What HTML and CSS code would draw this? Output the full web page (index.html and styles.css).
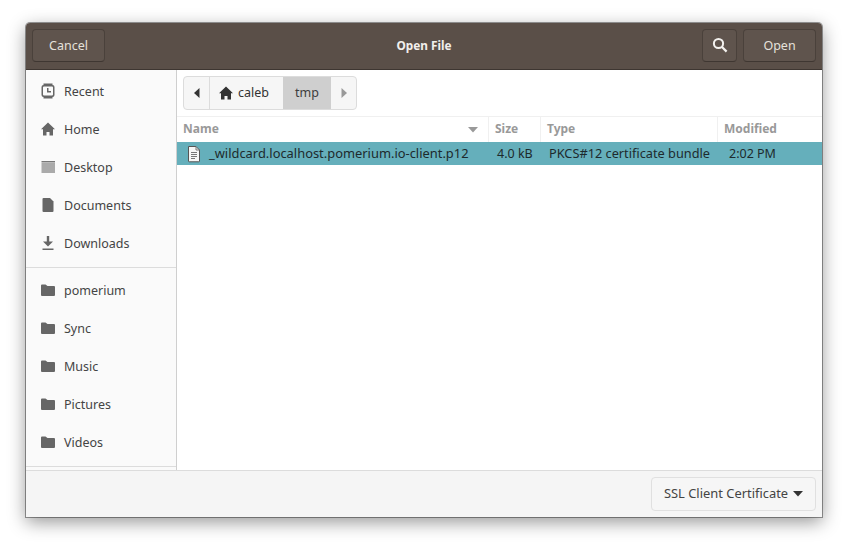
FILE: index.html
```html
<!DOCTYPE html>
<html lang="en">
<head>
<meta charset="utf-8">
<title>Open File</title>
<link rel="stylesheet" href="styles.css">
</head>
<body>
<div class="dialog">
  <header class="titlebar">
    <button class="hbtn cancel">Cancel</button>
    <div class="title">Open File</div>
    <button class="hbtn search" aria-label="Search">
      <svg width="16" height="16" viewBox="0 0 16 16"><circle cx="6.5" cy="6.5" r="4.6" fill="none" stroke="#f4f2ef" stroke-width="2"/><path d="M10 10l4.6 4.6" stroke="#f4f2ef" stroke-width="2.2" fill="none"/></svg>
    </button>
    <button class="hbtn open">Open</button>
  </header>
  <div class="middle">
    <nav class="sidebar">
      <ul class="places">
        <li class="place"><svg class="ic" width="16" height="16" viewBox="0 0 16 16"><path fill-rule="evenodd" fill="#666" d="M3.500 0.500h9v1.500a2 2 0 0 1 2 2v8a2 2 0 0 1-2 2v1.500h-9V14a2 2 0 0 1-2-2V4a2 2 0 0 1 2-2zM4 3.500a1 1 0 0 0-1 1v7a1 1 0 0 0 1 1h8a1 1 0 0 0 1-1v-7a1 1 0 0 0-1-1z"/><path fill="#666" d="M7 5h1.500v3H11v1.500H7z"/></svg><span>Recent</span></li>
        <li class="place"><svg class="ic" width="16" height="16" viewBox="0 0 16 16"><use href="#house" fill="#666"/></svg><span>Home</span></li>
        <li class="place"><svg class="ic" width="16" height="16" viewBox="0 0 16 16"><path fill="#777" d="M1.500 2h13.500v1.500H1.500z"/><path fill="#aaa" d="M1.500 4h13.500v10H1.500z"/></svg><span>Desktop</span></li>
        <li class="place"><svg class="ic" width="16" height="16" viewBox="0 0 16 16"><path fill="#666" d="M3.500 1H10l3.500 3.500V14a1 1 0 0 1-1 1H3.500a1 1 0 0 1-1-1V2a1 1 0 0 1 1-1z"/></svg><span>Documents</span></li>
        <li class="place"><svg class="ic" width="16" height="16" viewBox="0 0 16 16"><path fill="#666" d="M6.800 1h2.400v5.500H13L8 11.500 3 6.500h3.800zM2.500 13.500h11V15h-11z"/></svg><span>Downloads</span></li>
      </ul>
      <div class="sep"></div>
      <ul class="places">
        <li class="place"><svg class="ic" width="16" height="16" viewBox="0 0 16 16"><use href="#folder"/></svg><span>pomerium</span></li>
        <li class="place"><svg class="ic" width="16" height="16" viewBox="0 0 16 16"><use href="#folder"/></svg><span>Sync</span></li>
        <li class="place"><svg class="ic" width="16" height="16" viewBox="0 0 16 16"><use href="#folder"/></svg><span>Music</span></li>
        <li class="place"><svg class="ic" width="16" height="16" viewBox="0 0 16 16"><use href="#folder"/></svg><span>Pictures</span></li>
        <li class="place"><svg class="ic" width="16" height="16" viewBox="0 0 16 16"><use href="#folder"/></svg><span>Videos</span></li>
      </ul>
      <div class="sep last"></div>
    </nav>
    <main class="content">
      <div class="pathbar-wrap">
        <div class="pathbar">
          <div class="seg arrow"><svg width="8" height="10" viewBox="0 0 8 10"><path fill="#333" d="M6.500 0v10L1 5z"/></svg></div>
          <div class="seg home"><svg width="16" height="16" viewBox="0 0 16 16"><use href="#house" fill="#333"/></svg><span>caleb</span></div>
          <div class="seg active">tmp</div>
          <div class="seg arrow end"><svg width="8" height="10" viewBox="0 0 8 10"><path fill="#999" d="M1.500 0v10L7 5z"/></svg></div>
        </div>
      </div>
      <div class="cols">
        <div class="col c-name"><span>Name</span><svg width="10" height="6" viewBox="0 0 10 6"><path fill="#999" d="M0 0h10L5 5.500z"/></svg></div>
        <div class="col c-size">Size</div>
        <div class="col c-type">Type</div>
        <div class="col c-mod">Modified</div>
      </div>
      <div class="row">
        <div class="cell c-name"><svg class="fileic" width="16" height="18" viewBox="0 0 16 18"><path fill="#f6f6f5" stroke="#555" d="M2.500 1.500h7.500l3.500 3.500v11a.8.8 0 0 1-.8.800H3.300a.8.8 0 0 1-.8-.8z"/><path fill="none" stroke="#777" d="M10 1.500V5h3.500M5 7.500h6M5 9.500h6M5 11.500h6M5 13.500h4"/></svg><span>_wildcard.localhost.pomerium.io-client.p12</span></div>
        <div class="cell c-size val">4.0 kB</div>
        <div class="cell c-type val">PKCS#12 certificate bundle</div>
        <div class="cell c-mod val">2:02 PM</div>
      </div>
    </main>
  </div>
  <footer class="bottombar">
    <button class="filter"><span>SSL Client Certificate</span><svg width="10" height="6" viewBox="0 0 10 6"><path fill="#333" d="M0 0h10L5 5.500z"/></svg></button>
  </footer>
</div>
<svg class="defs" width="0" height="0"><defs><path id="folder" fill="#666" d="M1 3.500a1 1 0 0 1 1-1h3.500l2 1.500H14a1 1 0 0 1 1 1v8a1 1 0 0 1-1 1H2a1 1 0 0 1-1-1z"/><path id="house" d="M8 1.500l7 6.700H13v6.300H9.500V11h-3v3.500H3V8.200H1z"/></defs></svg>
</body>
</html>
```

FILE: styles.css
```css
* { box-sizing: border-box; }
html, body { margin: 0; height: 100%; }
body {
  background: #fff;
  padding: 23px 26px 29px;
  font-family: "Noto Sans", sans-serif;
  font-size: 12.500px;
  color: #3d3d3d;
  overflow: hidden;
}
ul { list-style: none; margin: 0; padding: 0; }
button { font: inherit; }
.defs { position: absolute; }
.dialog {
  height: 494px;
  display: flex;
  flex-direction: column;
  border-radius: 4px 4px 0 0;
  background: #fafafa;
  box-shadow: 0 0 0 1px rgba(0,0,0,.38), 0 5px 18px rgba(0,0,0,.42);
}
.titlebar {
  height: 47px;
  flex: none;
  display: flex;
  align-items: flex-start;
  padding: 6px 6px 0;
  gap: 6px;
  background: #5a4f48;
  border-bottom: 1px solid #3e3631;
  border-radius: 4px 4px 0 0;
}
.hbtn {
  height: 33px;
  padding: 0 0 1px;
  border: 1px solid #4a413b;
  border-bottom-color: #3f3732;
  border-radius: 4px;
  background: #5f544d;
  color: #e5e1dc;
  display: flex;
  align-items: center;
  justify-content: center;
}
.cancel { width: 73px; }
.search { width: 35px; }
.open { width: 73px; }
.title {
  flex: 1;
  height: 32px;
  line-height: 32px;
  text-align: center;
  color: #f2efec;
  font-weight: 700;
  font-size: 11.800px;
  padding-left: 41px;
}
.middle { flex: 1; min-height: 0; display: flex; }
.sidebar {
  width: 151px;
  flex: none;
  background: #fafafa;
  border-right: 1px solid #cfcfcf;
  display: flex;
  flex-direction: column;
}
.place {
  height: 38px;
  display: flex;
  align-items: center;
  gap: 8px;
  padding-left: 14px;
  color: #444;
}
.ic { flex: none; }
.sep { height: 1px; background: #dcdcdc; margin: 5px 0 3px; }
.sep.last { margin: 5px 0 0; }
.places:first-child { margin-top: 2px; }
.content { flex: 1; min-width: 0; background: #fff; }
.pathbar-wrap {
  height: 47px;
  padding: 6px 6px 0;
  border-bottom: 1px solid #f0f0f0;
}
.pathbar {
  display: inline-flex;
  height: 34px;
  border: 1px solid #dcdcdc;
  border-radius: 4px;
  background: #f6f6f6;
  overflow: hidden;
}
.seg {
  display: flex;
  align-items: center;
  justify-content: center;
  color: #333;
  padding-bottom: 1px;
}
.arrow { width: 26px; border-right: 1px solid #dcdcdc; }
.arrow.end { border-right: 0; width: 25px; }
.home { width: 73px; gap: 4px; justify-content: flex-start; padding-left: 8px; }
.active { width: 48px; background: #cfcfcf; color: #3d3d3d; }
.cols {
  height: 25px;
  display: flex;
  color: #999;
  font-weight: 700;
  font-size: 12px;
}
.col {
  display: flex;
  align-items: center;
  padding: 0 0 2px 6px;
  border-right: 1px solid #f0f0f0;
}
.c-name { width: 312px; }
.c-size { width: 52px; }
.c-type { width: 177px; }
.c-mod { flex: 1; border-right: 0; }
.col.c-name { justify-content: space-between; padding-right: 10px; }
.col.c-name svg { margin-top: 2px; }
.row {
  height: 23px;
  display: flex;
  background: #65afbb;
  color: #1d2a2d;
}
.cell { display: flex; align-items: center; white-space: nowrap; padding-bottom: 1px; }
.cell.c-name { padding-left: 9px; gap: 7px; font-size: 12.900px; }
.cell.c-type { font-size: 12.750px; }
.val { padding-left: 8px; }
.cell.c-mod { padding-left: 11px; }
.fileic { margin-top: 1px; }
.bottombar {
  height: 47px;
  flex: none;
  display: flex;
  align-items: center;
  justify-content: flex-end;
  padding: 0 6px 0 0;
  background: #f5f5f5;
  border-top: 1px solid #dcdcdc;
}
.filter {
  width: 165px;
  height: 34px;
  display: flex;
  align-items: center;
  justify-content: center;
  gap: 5px;
  padding: 0 0 3px;
  border: 1px solid #e0e0e0;
  border-radius: 4px;
  background: #f6f6f6;
  color: #444;
  font-size: 12.900px;
}
.filter svg { margin-top: 3px; }
```
